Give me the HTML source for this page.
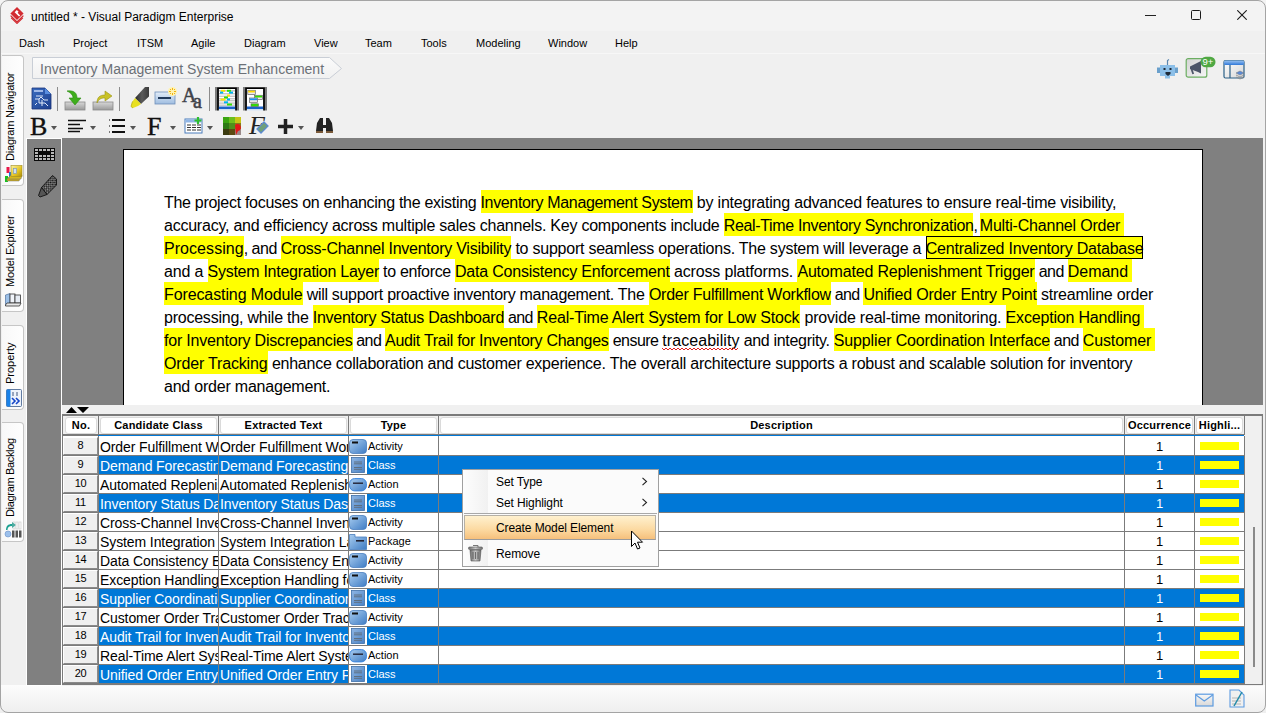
<!DOCTYPE html>
<html><head><meta charset="utf-8">
<style>
*{margin:0;padding:0;box-sizing:border-box}
html,body{width:1266px;height:713px;overflow:hidden;background:#f0f0f0;font-family:"Liberation Sans",sans-serif;color:#000;position:relative}
.a{position:absolute}
.menu{position:absolute;top:36px;font-size:11px;white-space:pre;line-height:14px}
.tab{position:absolute;left:2px;width:22px;background:linear-gradient(90deg,#f8f8f8,#fefefe);border:1px solid #c6c6c6;border-left:none;border-radius:0 4px 4px 0}
.vt{position:absolute;font-size:11px;white-space:pre;transform-origin:0 0;transform:rotate(-90deg);line-height:13px}
.sep{position:absolute;width:1px;background:#8c8c8c}
.dd{position:absolute;width:0;height:0;border-left:3px solid transparent;border-right:3px solid transparent;border-top:4px solid #555}
#frame{position:absolute;left:0;top:0;width:1266px;height:713px;border:1px solid #a4a4a4;border-radius:8px;pointer-events:none}

.hl{position:absolute;height:23px;background:#ffff00}
.tx{position:absolute;font-size:16px;line-height:23px;height:24px;white-space:pre;padding-top:1px;color:#000}
.hd{position:absolute;top:417px;height:17px;background:#fff;border:1px solid #dadada;border-radius:3px;font-size:11px;font-weight:bold;letter-spacing:0.2px;text-align:center;line-height:15px;white-space:pre;overflow:hidden}
.nb{position:absolute;left:63px;width:35px;height:18px;background:#efefef;border-top:1px solid #fff;border-left:1px solid #fff;border-right:1px solid #8a8a8a;border-bottom:1px solid #8a8a8a;font-size:11px;text-align:center;line-height:15px;letter-spacing:-0.3px}
.cl{position:absolute;height:18px;font-size:14px;letter-spacing:-0.1px;padding-top:1px;line-height:18px;white-space:pre;overflow:hidden;color:#000}
.ty{position:absolute;left:368px;width:70px;height:18px;font-size:11px;line-height:18px;white-space:pre;overflow:hidden}
.oc{position:absolute;left:1125px;width:69px;height:19px;padding-top:1px;font-size:13px;line-height:18px;text-align:center}
.mi{position:absolute;left:496px;font-size:12px;letter-spacing:-0.1px;line-height:15px;white-space:pre;color:#000}
</style></head><body>
<!-- title bar -->
<div class="a" style="left:0;top:0;width:1266px;height:31px;background:#f3f3f3"></div>
<svg class="a" style="left:10px;top:6px" width="15" height="18" viewBox="0 0 15 18">
  <path d="M7 1 L13.6 7.5 L7 14 L0.4 7.5Z" fill="#d22b31"/>
  <path d="M0.6 9.6 L7 15.9 L13.4 9.6" fill="none" stroke="#d22b31" stroke-width="1.3"/>
  <path d="M1.2 11.8 L7 17.4 L12.8 11.8" fill="none" stroke="#d22b31" stroke-width="1.2"/>
  <path d="M4.6 6.2 L6.8 4 L8.6 5.8 L7.6 6.8 L10.2 9.4 L9 10.6 Z" fill="#fff"/>
</svg>
<div class="a" style="left:31px;top:10px;font-size:12px;white-space:pre;line-height:15px">untitled * - Visual Paradigm Enterprise</div>
<!-- window controls -->
<div class="a" style="left:1145px;top:15px;width:11px;height:1px;background:#222"></div>
<div class="a" style="left:1191px;top:10px;width:10px;height:10px;border:1px solid #1a1a1a;border-radius:1.5px"></div>
<svg class="a" style="left:1237px;top:10px" width="10" height="10" viewBox="0 0 10 10"><path d="M0.3 0.3L9.7 9.7M9.7 0.3L0.3 9.7" stroke="#1a1a1a" stroke-width="1.1"/></svg>
<!-- menu -->
<div class="menu" style="left:19px">Dash</div>
<div class="menu" style="left:73px">Project</div>
<div class="menu" style="left:137px">ITSM</div>
<div class="menu" style="left:191px">Agile</div>
<div class="menu" style="left:244px">Diagram</div>
<div class="menu" style="left:314px">View</div>
<div class="menu" style="left:365px">Team</div>
<div class="menu" style="left:421px">Tools</div>
<div class="menu" style="left:476px">Modeling</div>
<div class="menu" style="left:548px">Window</div>
<div class="menu" style="left:615px">Help</div>
<div class="a" style="left:0;top:53px;width:1266px;height:1px;background:#f7f7f7"></div>


<!-- breadcrumb -->
<svg class="a" style="left:32px;top:57px" width="312" height="23" viewBox="0 0 312 23">
  <defs><linearGradient id="bcg" x1="0" y1="0" x2="0" y2="1"><stop offset="0" stop-color="#fbfbfb"/><stop offset="1" stop-color="#f1f1f1"/></linearGradient></defs>
  <path d="M0.5 0.5 H297.5 L309.5 11.5 L297.5 21.5 H0.5 Z" fill="url(#bcg)" stroke="#c9ced6"/>
</svg>
<div class="a" style="left:40px;top:61px;font-size:14px;color:#6b7077;white-space:pre;line-height:17px">Inventory Management System Enhancement</div>

<!-- toolbar row 1 -->
<svg class="a" style="left:31px;top:87px" width="21" height="23" viewBox="0 0 21 23">
  <defs><linearGradient id="g1" x1="0" y1="0" x2="1" y2="1"><stop offset="0" stop-color="#3a6cc0"/><stop offset="1" stop-color="#1e3f8e"/></linearGradient></defs>
  <path d="M1 1 H14 L20 7 V22 H1 Z" fill="url(#g1)" stroke="#1a347a" stroke-width="0.8"/>
  <path d="M14 1 V7 H20 Z" fill="#5a8ee0"/>
  <rect x="3" y="3" width="9" height="2" fill="#9fb8e8"/>
  <path d="M5 9 h7 M4 12 h4 l2 -2 l3 3 h4 M8 12 v4 h6 M6 16 l-2 2 M14 16 l3 3 M11 13 v6" stroke="#dfe8f8" stroke-width="1" fill="none"/>
</svg>
<div class="sep" style="left:57px;top:87px;height:24px"></div>
<svg class="a" style="left:64px;top:89px" width="22" height="22" viewBox="0 0 22 22">
  <defs><linearGradient id="gb" x1="0" y1="0" x2="0" y2="1"><stop offset="0" stop-color="#d8d8d8"/><stop offset="1" stop-color="#9a9a9a"/></linearGradient></defs>
  <rect x="1" y="13" width="20" height="8" fill="url(#gb)" stroke="#8a8a8a" stroke-width="0.8"/>
  <path d="M3 2 C10 1 13 4 13 9 H17 L11 16 L5 9 H9 C9 6 7 4 3 2Z" fill="#3fae1c" stroke="#2a8a10" stroke-width="0.6"/>
</svg>
<svg class="a" style="left:92px;top:89px" width="22" height="22" viewBox="0 0 22 22">
  <rect x="1" y="13" width="20" height="8" fill="url(#gb)" stroke="#8a8a8a" stroke-width="0.8"/>
  <path d="M5 14 C5 8 8 6 13 6 V2 L20 7 L13 12 V9 C9 9 7 10 5 14Z" fill="#c9c227" stroke="#9a931a" stroke-width="0.6"/>
</svg>
<div class="sep" style="left:119px;top:87px;height:24px"></div>
<svg class="a" style="left:128px;top:85px" width="22" height="24" viewBox="0 0 22 24">
  <defs><linearGradient id="hlg" x1="0" y1="0" x2="1" y2="0"><stop offset="0" stop-color="#2a2a2a"/><stop offset="0.5" stop-color="#5a5a5a"/><stop offset="1" stop-color="#3a3a3a"/></linearGradient></defs>
  <path d="M17 2 H21 V11.5 L13 19 L7 13 Z" fill="url(#hlg)"/>
  <path d="M7 13 L13 19 L10 21 L5 23 L3 21.5 L4.5 16.5 Z" fill="#e8e020"/>
  <path d="M4.5 16.5 L3 21.5 L5 23" fill="none" stroke="#b8b010" stroke-width="0.8"/>
</svg>
<svg class="a" style="left:154px;top:86px" width="24" height="20" viewBox="0 0 24 20">
  <defs><linearGradient id="gr" x1="0" y1="0" x2="0" y2="1"><stop offset="0" stop-color="#e3edf9"/><stop offset="1" stop-color="#9fbde0"/></linearGradient></defs>
  <rect x="1" y="6" width="20" height="12" fill="url(#gr)" stroke="#6f8fb9" stroke-width="0.8"/>
  <rect x="4" y="11" width="13" height="2" fill="#223b5c"/>
  <circle cx="18.5" cy="5.5" r="4.5" fill="#fff3b0"/><path d="M18.5 2v2M18.5 7v2M15 5.5h2M20 5.5h2M16 3l1 1M20 7l1 1M21 3l-1 1M17 7l-1 1" stroke="#f0a800" stroke-width="0.9"/>
</svg>
<div class="a" style="left:182px;top:85px;font-family:'Liberation Serif',serif;font-size:20px;color:#3e4148;line-height:20px;-webkit-text-stroke:0.5px #3e4148">A</div>
<div class="a" style="left:193px;top:91px;font-family:'Liberation Serif',serif;font-size:20px;color:#3e4148;line-height:20px;-webkit-text-stroke:0.5px #3e4148">a</div>
<div class="sep" style="left:209px;top:87px;height:24px"></div>
<svg class="a" style="left:215px;top:87px" width="24" height="24" viewBox="0 0 24 24">
  <rect x="0" y="0" width="2.3" height="23.5" fill="#7c7c7c"/><rect x="21.7" y="0" width="2.3" height="23.5" fill="#7c7c7c"/>
  <path d="M3 23.5 V1.2 H21 V23.5" fill="#fff" stroke="#000" stroke-width="1.8"/>
  <rect x="3.9" y="19.5" width="16.2" height="2.5" fill="#1d63c8"/><rect x="3.9" y="22" width="16.2" height="1.5" fill="#cfe0f4"/>
  <g fill="#c8c8c8"><rect x="4" y="3" width="16" height="1.6"/><rect x="4" y="6" width="16" height="1.4"/><rect x="4" y="8.6" width="16" height="1.4"/><rect x="4" y="11" width="16" height="1.4"/><rect x="4" y="13" width="16" height="1.4"/><rect x="4" y="15.4" width="16" height="1.4"/><rect x="4" y="17.5" width="16" height="1.4"/></g>
  <rect x="6" y="2.8" width="4" height="2" fill="#ffe400"/><rect x="12" y="2.8" width="4" height="2" fill="#33e000"/>
  <rect x="5" y="4.6" width="3.2" height="2" fill="#00b4f0"/><rect x="14" y="4.6" width="4" height="2" fill="#00b4f0"/>
  <rect x="12" y="7.5" width="3" height="2" fill="#ffe400"/><rect x="9" y="9.5" width="4" height="2" fill="#33e000"/>
  <rect x="5.5" y="11.5" width="5" height="2" fill="#ffe400"/><rect x="12" y="11.5" width="3" height="2" fill="#00b4f0"/>
  <rect x="9" y="14.3" width="4" height="2" fill="#00b4f0"/><rect x="12" y="16.5" width="5" height="2" fill="#33e000"/>
</svg>
<svg class="a" style="left:243px;top:87px" width="24" height="24" viewBox="0 0 24 24">
  <rect x="0" y="0" width="2.3" height="23.5" fill="#7c7c7c"/><rect x="21.7" y="0" width="2.3" height="23.5" fill="#7c7c7c"/>
  <path d="M3 23.5 V1.2 H21 V23.5" fill="#fff" stroke="#000" stroke-width="1.8"/>
  <rect x="3.9" y="19.5" width="16.2" height="2.5" fill="#1d63c8"/><rect x="3.9" y="22" width="16.2" height="1.5" fill="#cfe0f4"/>
  <rect x="4.8" y="3.3" width="7.5" height="4.3" fill="#ece8f0" stroke="#666" stroke-width="0.7"/><rect x="5.2" y="3.7" width="6.7" height="1.8" fill="#ffd800"/>
  <rect x="11.5" y="8.3" width="8" height="4.3" fill="#ece8f0" stroke="#666" stroke-width="0.7"/><rect x="11.9" y="8.7" width="7.2" height="1.8" fill="#33e000"/>
  <rect x="6.5" y="11" width="8" height="4.3" fill="#f2ece8" stroke="#666" stroke-width="0.7"/><rect x="6.9" y="11.4" width="7.2" height="1.8" fill="#1a90f0"/>
  <rect x="8" y="16.8" width="7.5" height="2.7" fill="#33e000" stroke="#666" stroke-width="0.6"/>
</svg>

<!-- toolbar row 2 -->
<div class="a" style="left:30px;top:114px;font-family:'Liberation Serif',serif;font-size:26px;line-height:26px;color:#111;-webkit-text-stroke:0.4px #111">B</div>
<div class="dd" style="left:51px;top:126px"></div>
<svg class="a" style="left:68px;top:119px" width="19" height="14" viewBox="0 0 19 14"><path d="M0 1.5h18M0 5.5h12M0 9.5h15M0 12.5h12" stroke="#111" stroke-width="1.6"/></svg>
<div class="dd" style="left:90px;top:126px"></div>
<svg class="a" style="left:108px;top:118px" width="18" height="16" viewBox="0 0 18 16"><path d="M4 2h13M4 8h13M4 14h13" stroke="#111" stroke-width="1.8"/><path d="M1 1l1 1-1 1M1 7l1 1-1 1M1 13l1 1-1 1" stroke="#444" stroke-width="0.7" fill="none"/></svg>
<div class="dd" style="left:130px;top:126px"></div>
<div class="a" style="left:147px;top:114px;font-family:'Liberation Serif',serif;font-size:26px;line-height:26px;color:#111;-webkit-text-stroke:0.4px #111">F</div>
<div class="dd" style="left:170px;top:126px"></div>
<svg class="a" style="left:184px;top:117px" width="20" height="18" viewBox="0 0 20 18">
  <rect x="1" y="2" width="17" height="14" fill="#fff" stroke="#4a7cbc"/>
  <rect x="1.5" y="2.5" width="16" height="3" fill="#8fb5e6"/>
  <path d="M3 8h4M8 8h4M13 8h4M3 10.5h4M8 10.5h4M13 10.5h4M3 13h4M8 13h4M13 13h4" stroke="#333" stroke-width="1.2"/>
  <path d="M14 0v7M10.5 3.5h7" stroke="#2fbf2f" stroke-width="2.2"/>
</svg>
<div class="dd" style="left:207px;top:126px"></div>
<svg class="a" style="left:223px;top:117px" width="19" height="18" viewBox="0 0 19 18">
  <rect x="0" y="0" width="6" height="6" fill="#3aa512"/><rect x="6" y="0" width="6" height="6" fill="#6cbf1c"/><rect x="12" y="0" width="6" height="6" fill="#c6c416"/>
  <rect x="0" y="6" width="6" height="6" fill="#2c7a14"/><rect x="6" y="6" width="6" height="6" fill="#4f8f1c"/><rect x="12" y="6" width="6" height="6" fill="#8a7a1a"/>
  <rect x="0" y="12" width="6" height="6" fill="#3b3b10"/><rect x="6" y="12" width="6" height="6" fill="#5a4a12"/><rect x="12" y="12" width="6" height="6" fill="#9a8a8a"/>
  <path d="M12 8 a3.5 3.5 0 1 1 3 6 L13 18 Z" fill="#e01818"/>
</svg>
<div class="a" style="left:249px;top:113px;font-family:'Liberation Serif',serif;font-style:italic;font-size:26px;line-height:26px;color:#222">F</div>
<svg class="a" style="left:256px;top:121px" width="13" height="13" viewBox="0 0 13 13"><path d="M8 1 L12 5 L5 12 L1 8Z" fill="#6f9f78" stroke="#5c8ad0" stroke-width="1.3"/></svg>
<svg class="a" style="left:277px;top:118px" width="17" height="17" viewBox="0 0 17 17"><path d="M8.5 1v15M1 8.5h15" stroke="#222" stroke-width="3.5"/></svg>
<div class="dd" style="left:298px;top:126px"></div>
<svg class="a" style="left:315px;top:117px" width="19" height="17" viewBox="0 0 19 17">
  <path d="M2 6 L5 1 H8 V8 H11 V1 H14 L17 6 L18 14 H11 V11 H8 V14 H1 Z" fill="#222"/>
  <rect x="1" y="14" width="7" height="2" fill="#7a5a3a"/><rect x="11" y="14" width="7" height="2" fill="#7a5a3a"/>
</svg>

<!-- right toolbar icons -->
<svg class="a" style="left:1156px;top:58px" width="24" height="22" viewBox="0 0 24 22">
  <rect x="4" y="7" width="15" height="11" fill="#8cbfe8"/>
  <rect x="1" y="9.5" width="3" height="5.5" fill="#6aa0cc"/><rect x="19" y="9.5" width="3" height="5.5" fill="#6aa0cc"/>
  <path d="M11.5 7 V2.5 L13 1.5" stroke="#5a86b0" stroke-width="1.2" fill="none"/>
  <rect x="7.5" y="10" width="2" height="2" fill="#1e2a38"/><rect x="13.5" y="10" width="2" height="2" fill="#1e2a38"/>
  <path d="M9.5 14 h5 v2 l-2.5 2 l-2.5 -2z" fill="#1e2a38"/>
  <rect x="9" y="18" width="5" height="2.5" fill="#8cbfe8"/>
</svg>
<svg class="a" style="left:1185px;top:56px" width="32" height="24" viewBox="0 0 32 24">
  <defs><linearGradient id="mgg" x1="0" y1="0" x2="1" y2="1"><stop offset="0" stop-color="#d4d4d4"/><stop offset="1" stop-color="#f6f6f6"/></linearGradient></defs>
  <rect x="1.2" y="2.6" width="20.6" height="18.6" rx="2" fill="url(#mgg)" stroke="#6cae62" stroke-width="1.2"/>
  <path d="M5 10.5 L13 6.5 V16 L5 13 Z" fill="#4c5568"/>
  <path d="M13 6.5 L16 5 V17.5 L13 16Z" fill="#4c5568"/>
  <path d="M6.5 13 L8.2 18" stroke="#4c5568" stroke-width="1.8"/>
  <rect x="15.5" y="0.8" width="15" height="10.5" rx="5.2" fill="#4fa843"/>
  <text x="23" y="9.3" font-family="Liberation Sans" font-size="9.5" fill="#fff" text-anchor="middle">9+</text>
</svg>
<svg class="a" style="left:1223px;top:59px" width="23" height="22" viewBox="0 0 23 22">
  <defs><linearGradient id="lyg" x1="0" y1="0" x2="0" y2="1"><stop offset="0" stop-color="#9cc4f2"/><stop offset="1" stop-color="#2f78d8"/></linearGradient>
  <linearGradient id="lyp" x1="0" y1="0" x2="1" y2="1"><stop offset="0" stop-color="#ffffff"/><stop offset="1" stop-color="#d6d6d6"/></linearGradient></defs>
  <rect x="1" y="1.5" width="20" height="17.5" rx="1.5" fill="url(#lyp)" stroke="#2a5f86" stroke-width="1.2"/>
  <rect x="1" y="1.5" width="20" height="4.5" rx="1.5" fill="url(#lyg)"/>
  <path d="M7 6 V19" stroke="#2a5f86" stroke-width="1.2"/>
  <path d="M13 14 l4 -2 l4 2 l-4 2z" fill="#5a8ad8" stroke="#777" stroke-width="0.5"/>
  <path d="M13 16 l4 2 l4 -2 M13 18 l4 2 l4 -2" fill="none" stroke="#888" stroke-width="0.8"/>
</svg>

<!-- left tabs -->
<div class="tab" style="top:55px;height:131px"></div>
<div class="tab" style="top:199px;height:113px"></div>
<div class="tab" style="top:325px;height:85px"></div>
<div class="tab" style="top:422px;height:120px"></div>
<div class="vt" style="left:4px;top:160.5px;letter-spacing:-0.2px">Diagram Navigator</div>
<div class="vt" style="left:4px;top:287px;letter-spacing:-0.18px">Model Explorer</div>
<div class="vt" style="left:4px;top:383.5px">Property</div>
<div class="vt" style="left:4px;top:517px;letter-spacing:-0.33px">Diagram Backlog</div>

<!-- status bar -->
<div class="a" style="left:0;top:685px;width:1266px;height:28px;background:linear-gradient(#fcfcfc,#eeeeee)"></div>
<!-- canvas areas -->
<div class="a" style="left:26px;top:138px;width:1237px;height:548px;background:#fff"></div>
<div class="a" style="left:27px;top:139px;width:34px;height:546px;background:#808080"></div>
<div class="a" style="left:62px;top:138px;width:1201px;height:267px;background:#808080"></div>
<div class="a" style="left:123px;top:149px;width:1080px;height:256px;background:#fff;border:1px solid #000;border-bottom:none"></div>


<!-- table -->
<svg width="0" height="0" style="position:absolute"><defs>
<linearGradient id="actg" x1="0" y1="0" x2="1" y2="1"><stop offset="0" stop-color="#a9cdf0"/><stop offset="1" stop-color="#3f7cc4"/></linearGradient>
<linearGradient id="clsg" x1="0" y1="0" x2="1" y2="1"><stop offset="0" stop-color="#8fb6e4"/><stop offset="1" stop-color="#4a82c4"/></linearGradient>
</defs></svg>
<div class="a" style="left:62px;top:405px;width:1201px;height:281px;background:#f0f0f0"></div>
<svg class="a" style="left:65px;top:406px" width="25" height="8" viewBox="0 0 25 8"><path d="M1 7 L6.5 1 L12 7Z M12 1 H24 L18 7Z" fill="#000"/></svg>
<div class="a" style="left:62px;top:414px;width:1201px;height:271px;border:1px solid #7b7b7b;border-top-width:2px;background:#fff"></div>
<div class="a" style="left:63px;top:416px;width:1181px;height:19px;background:#f0f0f0"></div>
<div class="a" style="left:1244px;top:416px;width:18px;height:268px;background:#f0f0f0;border-right:1px solid #dcdcdc"></div>
<div class="a" style="left:1253px;top:527px;width:2px;height:140px;background:#8a8a8a"></div>

<div class="hd" style="left:65px;width:32px">No.</div>
<div class="a" style="left:98px;top:416px;width:1px;height:19px;background:#7b7b7b"></div>
<div class="hd" style="left:100px;width:117px">Candidate Class</div>
<div class="a" style="left:218px;top:416px;width:1px;height:19px;background:#7b7b7b"></div>
<div class="hd" style="left:220px;width:127px">Extracted Text</div>
<div class="a" style="left:348px;top:416px;width:1px;height:19px;background:#7b7b7b"></div>
<div class="hd" style="left:350px;width:87px">Type</div>
<div class="a" style="left:438px;top:416px;width:1px;height:19px;background:#7b7b7b"></div>
<div class="hd" style="left:440px;width:683px">Description</div>
<div class="a" style="left:1124px;top:416px;width:1px;height:19px;background:#7b7b7b"></div>
<div class="hd" style="left:1126px;width:67px">Occurrence</div>
<div class="a" style="left:1194px;top:416px;width:1px;height:19px;background:#7b7b7b"></div>
<div class="hd" style="left:1196px;width:47px">Highli...</div>
<div class="a" style="left:1244px;top:416px;width:1px;height:19px;background:#7b7b7b"></div>
<div class="a" style="left:63px;top:434px;width:1181px;height:1px;background:#7b7b7b"></div>
<div class="a" style="left:98px;top:435px;width:1146px;height:1px;background:#0078d7"></div>
<div class="a" style="left:63px;top:435px;width:35px;height:1px;background:#7b7b7b"></div>
<div class="a" style="left:63px;top:455px;width:1181px;height:1px;background:#7b7b7b"></div>
<div class="nb" style="top:437px">8</div>
<div class="cl" style="left:100px;top:437px;width:118px;">Order Fulfillment Workflow</div>
<div class="cl" style="left:220px;top:437px;width:128px;">Order Fulfillment Workflow</div>
<svg class="a" style="left:349px;top:439px" width="18" height="15" viewBox="0 0 18 15"><defs></defs><rect x="0.5" y="0.5" width="17" height="14" rx="3.5" fill="url(#actg)" stroke="#4a7fbf" stroke-width="0.8"/><rect x="3" y="2.5" width="6" height="2" fill="#111"/></svg>
<div class="ty" style="top:437px;">Activity</div>
<div class="oc" style="top:437px;">1</div>
<div class="a" style="left:1200px;top:442px;width:39px;height:8px;background:#ffff00"></div>
<div class="a" style="left:98px;top:456px;width:1146px;height:18px;background:#0078d7"></div>
<div class="a" style="left:63px;top:474px;width:1181px;height:1px;background:#7b7b7b"></div>
<div class="nb" style="top:456px">9</div>
<div class="cl" style="left:100px;top:456px;width:118px;color:#fff;">Demand Forecasting Module</div>
<div class="cl" style="left:220px;top:456px;width:128px;color:#fff;">Demand Forecasting Module</div>
<div class="a" style="left:349px;top:456px;width:18px;height:18px;background:#fff"></div><svg class="a" style="left:351px;top:457px" width="14" height="16" viewBox="0 0 14 16"><rect x="0.5" y="0.5" width="13" height="15" fill="url(#clsg)" stroke="#3e6fa8" stroke-width="0.8"/><path d="M3 5h8M3 6.8h8M3 10.5h8M3 12.3h8" stroke="#5f6f80" stroke-width="1"/></svg>
<div class="ty" style="top:456px;color:#fff;">Class</div>
<div class="oc" style="top:456px;color:#fff;">1</div>
<div class="a" style="left:1200px;top:461px;width:39px;height:8px;background:#ffff00"></div>
<div class="a" style="left:63px;top:493px;width:1181px;height:1px;background:#7b7b7b"></div>
<div class="nb" style="top:475px">10</div>
<div class="cl" style="left:100px;top:475px;width:118px;">Automated Replenishment Trigger</div>
<div class="cl" style="left:220px;top:475px;width:128px;">Automated Replenishment Trigger</div>
<svg class="a" style="left:349px;top:478px" width="18" height="14" viewBox="0 0 18 14"><rect x="0.6" y="0.6" width="16.8" height="12.3" rx="5" fill="url(#actg)" stroke="#3a86e0" stroke-width="1"/><rect x="4" y="4.5" width="10" height="1.4" fill="#223"/></svg>
<div class="ty" style="top:475px;">Action</div>
<div class="oc" style="top:475px;">1</div>
<div class="a" style="left:1200px;top:480px;width:39px;height:8px;background:#ffff00"></div>
<div class="a" style="left:98px;top:494px;width:1146px;height:18px;background:#0078d7"></div>
<div class="a" style="left:63px;top:512px;width:1181px;height:1px;background:#7b7b7b"></div>
<div class="nb" style="top:494px">11</div>
<div class="cl" style="left:100px;top:494px;width:118px;color:#fff;">Inventory Status Dashboard</div>
<div class="cl" style="left:220px;top:494px;width:128px;color:#fff;">Inventory Status Dashboard</div>
<div class="a" style="left:349px;top:494px;width:18px;height:18px;background:#fff"></div><svg class="a" style="left:351px;top:495px" width="14" height="16" viewBox="0 0 14 16"><rect x="0.5" y="0.5" width="13" height="15" fill="url(#clsg)" stroke="#3e6fa8" stroke-width="0.8"/><path d="M3 5h8M3 6.8h8M3 10.5h8M3 12.3h8" stroke="#5f6f80" stroke-width="1"/></svg>
<div class="ty" style="top:494px;color:#fff;">Class</div>
<div class="oc" style="top:494px;color:#fff;">1</div>
<div class="a" style="left:1200px;top:499px;width:39px;height:8px;background:#ffff00"></div>
<div class="a" style="left:63px;top:531px;width:1181px;height:1px;background:#7b7b7b"></div>
<div class="nb" style="top:513px">12</div>
<div class="cl" style="left:100px;top:513px;width:118px;">Cross-Channel Inventory Visibility</div>
<div class="cl" style="left:220px;top:513px;width:128px;">Cross-Channel Inventory Visibility</div>
<svg class="a" style="left:349px;top:515px" width="18" height="15" viewBox="0 0 18 15"><defs></defs><rect x="0.5" y="0.5" width="17" height="14" rx="3.5" fill="url(#actg)" stroke="#4a7fbf" stroke-width="0.8"/><rect x="3" y="2.5" width="6" height="2" fill="#111"/></svg>
<div class="ty" style="top:513px;">Activity</div>
<div class="oc" style="top:513px;">1</div>
<div class="a" style="left:1200px;top:518px;width:39px;height:8px;background:#ffff00"></div>
<div class="a" style="left:63px;top:550px;width:1181px;height:1px;background:#7b7b7b"></div>
<div class="nb" style="top:532px">13</div>
<div class="cl" style="left:100px;top:532px;width:118px;">System Integration Layer</div>
<div class="cl" style="left:220px;top:532px;width:128px;">System Integration Layer</div>
<svg class="a" style="left:349px;top:534px" width="18" height="16" viewBox="0 0 18 16"><path d="M0.5 0.5 H6 V3 H17.5 V15.5 H0.5Z" fill="url(#actg)" stroke="#4a7fbf" stroke-width="0.8"/><rect x="7" y="6" width="8" height="1.6" fill="#223"/></svg>
<div class="ty" style="top:532px;">Package</div>
<div class="oc" style="top:532px;">1</div>
<div class="a" style="left:1200px;top:537px;width:39px;height:8px;background:#ffff00"></div>
<div class="a" style="left:63px;top:569px;width:1181px;height:1px;background:#7b7b7b"></div>
<div class="nb" style="top:551px">14</div>
<div class="cl" style="left:100px;top:551px;width:118px;">Data Consistency Enforcement</div>
<div class="cl" style="left:220px;top:551px;width:128px;">Data Consistency Enforcement</div>
<svg class="a" style="left:349px;top:553px" width="18" height="15" viewBox="0 0 18 15"><defs></defs><rect x="0.5" y="0.5" width="17" height="14" rx="3.5" fill="url(#actg)" stroke="#4a7fbf" stroke-width="0.8"/><rect x="3" y="2.5" width="6" height="2" fill="#111"/></svg>
<div class="ty" style="top:551px;">Activity</div>
<div class="oc" style="top:551px;">1</div>
<div class="a" style="left:1200px;top:556px;width:39px;height:8px;background:#ffff00"></div>
<div class="a" style="left:63px;top:588px;width:1181px;height:1px;background:#7b7b7b"></div>
<div class="nb" style="top:570px">15</div>
<div class="cl" style="left:100px;top:570px;width:118px;">Exception Handling for Inventory Discrepancies</div>
<div class="cl" style="left:220px;top:570px;width:128px;">Exception Handling for Inventory Discrepancies</div>
<svg class="a" style="left:349px;top:572px" width="18" height="15" viewBox="0 0 18 15"><defs></defs><rect x="0.5" y="0.5" width="17" height="14" rx="3.5" fill="url(#actg)" stroke="#4a7fbf" stroke-width="0.8"/><rect x="3" y="2.5" width="6" height="2" fill="#111"/></svg>
<div class="ty" style="top:570px;">Activity</div>
<div class="oc" style="top:570px;">1</div>
<div class="a" style="left:1200px;top:575px;width:39px;height:8px;background:#ffff00"></div>
<div class="a" style="left:98px;top:589px;width:1146px;height:18px;background:#0078d7"></div>
<div class="a" style="left:63px;top:607px;width:1181px;height:1px;background:#7b7b7b"></div>
<div class="nb" style="top:589px">16</div>
<div class="cl" style="left:100px;top:589px;width:118px;color:#fff;">Supplier Coordination Interface</div>
<div class="cl" style="left:220px;top:589px;width:128px;color:#fff;">Supplier Coordination Interface</div>
<div class="a" style="left:349px;top:589px;width:18px;height:18px;background:#fff"></div><svg class="a" style="left:351px;top:590px" width="14" height="16" viewBox="0 0 14 16"><rect x="0.5" y="0.5" width="13" height="15" fill="url(#clsg)" stroke="#3e6fa8" stroke-width="0.8"/><path d="M3 5h8M3 6.8h8M3 10.5h8M3 12.3h8" stroke="#5f6f80" stroke-width="1"/></svg>
<div class="ty" style="top:589px;color:#fff;">Class</div>
<div class="oc" style="top:589px;color:#fff;">1</div>
<div class="a" style="left:1200px;top:594px;width:39px;height:8px;background:#ffff00"></div>
<div class="a" style="left:63px;top:626px;width:1181px;height:1px;background:#7b7b7b"></div>
<div class="nb" style="top:608px">17</div>
<div class="cl" style="left:100px;top:608px;width:118px;">Customer Order Tracking</div>
<div class="cl" style="left:220px;top:608px;width:128px;">Customer Order Tracking</div>
<svg class="a" style="left:349px;top:610px" width="18" height="15" viewBox="0 0 18 15"><defs></defs><rect x="0.5" y="0.5" width="17" height="14" rx="3.5" fill="url(#actg)" stroke="#4a7fbf" stroke-width="0.8"/><rect x="3" y="2.5" width="6" height="2" fill="#111"/></svg>
<div class="ty" style="top:608px;">Activity</div>
<div class="oc" style="top:608px;">1</div>
<div class="a" style="left:1200px;top:613px;width:39px;height:8px;background:#ffff00"></div>
<div class="a" style="left:98px;top:627px;width:1146px;height:18px;background:#0078d7"></div>
<div class="a" style="left:63px;top:645px;width:1181px;height:1px;background:#7b7b7b"></div>
<div class="nb" style="top:627px">18</div>
<div class="cl" style="left:100px;top:627px;width:118px;color:#fff;">Audit Trail for Inventory Changes</div>
<div class="cl" style="left:220px;top:627px;width:128px;color:#fff;">Audit Trail for Inventory Changes</div>
<div class="a" style="left:349px;top:627px;width:18px;height:18px;background:#fff"></div><svg class="a" style="left:351px;top:628px" width="14" height="16" viewBox="0 0 14 16"><rect x="0.5" y="0.5" width="13" height="15" fill="url(#clsg)" stroke="#3e6fa8" stroke-width="0.8"/><path d="M3 5h8M3 6.8h8M3 10.5h8M3 12.3h8" stroke="#5f6f80" stroke-width="1"/></svg>
<div class="ty" style="top:627px;color:#fff;">Class</div>
<div class="oc" style="top:627px;color:#fff;">1</div>
<div class="a" style="left:1200px;top:632px;width:39px;height:8px;background:#ffff00"></div>
<div class="a" style="left:63px;top:664px;width:1181px;height:1px;background:#7b7b7b"></div>
<div class="nb" style="top:646px">19</div>
<div class="cl" style="left:100px;top:646px;width:118px;">Real-Time Alert System for Low Stock</div>
<div class="cl" style="left:220px;top:646px;width:128px;">Real-Time Alert System for Low Stock</div>
<svg class="a" style="left:349px;top:649px" width="18" height="14" viewBox="0 0 18 14"><rect x="0.6" y="0.6" width="16.8" height="12.3" rx="5" fill="url(#actg)" stroke="#3a86e0" stroke-width="1"/><rect x="4" y="4.5" width="10" height="1.4" fill="#223"/></svg>
<div class="ty" style="top:646px;">Action</div>
<div class="oc" style="top:646px;">1</div>
<div class="a" style="left:1200px;top:651px;width:39px;height:8px;background:#ffff00"></div>
<div class="a" style="left:98px;top:665px;width:1146px;height:18px;background:#0078d7"></div>
<div class="a" style="left:63px;top:683px;width:1181px;height:1px;background:#7b7b7b"></div>
<div class="nb" style="top:665px">20</div>
<div class="cl" style="left:100px;top:665px;width:118px;color:#fff;">Unified Order Entry Point</div>
<div class="cl" style="left:220px;top:665px;width:128px;color:#fff;">Unified Order Entry Point</div>
<div class="a" style="left:349px;top:665px;width:18px;height:18px;background:#fff"></div><svg class="a" style="left:351px;top:666px" width="14" height="16" viewBox="0 0 14 16"><rect x="0.5" y="0.5" width="13" height="15" fill="url(#clsg)" stroke="#3e6fa8" stroke-width="0.8"/><path d="M3 5h8M3 6.8h8M3 10.5h8M3 12.3h8" stroke="#5f6f80" stroke-width="1"/></svg>
<div class="ty" style="top:665px;color:#fff;">Class</div>
<div class="oc" style="top:665px;color:#fff;">1</div>
<div class="a" style="left:1200px;top:670px;width:39px;height:8px;background:#ffff00"></div>
<div class="a" style="left:98px;top:436px;width:1px;height:248px;background:#7b7b7b"></div>
<div class="a" style="left:218px;top:436px;width:1px;height:248px;background:#7b7b7b"></div>
<div class="a" style="left:348px;top:436px;width:1px;height:248px;background:#7b7b7b"></div>
<div class="a" style="left:438px;top:436px;width:1px;height:248px;background:#7b7b7b"></div>
<div class="a" style="left:1124px;top:436px;width:1px;height:248px;background:#7b7b7b"></div>
<div class="a" style="left:1194px;top:436px;width:1px;height:248px;background:#7b7b7b"></div>
<div class="a" style="left:1244px;top:436px;width:1px;height:248px;background:#7b7b7b"></div>
<!-- end table -->

<!-- document text -->
<div id="doc">
<div class="tx" style="left:164.0px;top:190px;letter-spacing:-0.293px">The project focuses on enhancing the existing </div>
<div class="hl" style="left:480.5px;top:190px;width:212.1px;"></div>
<div class="tx" style="left:480.5px;top:190px;letter-spacing:-0.346px">Inventory Management System</div>
<div class="tx" style="left:692.6px;top:190px;letter-spacing:-0.209px"> by integrating advanced features to ensure real-time visibility,</div>
<div class="tx" style="left:164.0px;top:213px;letter-spacing:-0.233px">accuracy, and efficiency across multiple sales channels. Key components include </div>
<div class="hl" style="left:723.7px;top:213px;width:249.8px;"></div>
<div class="tx" style="left:723.7px;top:213px;letter-spacing:-0.341px">Real-Time Inventory Synchronization</div>
<div class="tx" style="left:973.5px;top:213px;letter-spacing:-1.295px">, </div>
<div class="hl" style="left:979.8px;top:213px;width:144.5px;"></div>
<div class="tx" style="left:979.8px;top:213px;letter-spacing:-0.200px">Multi-Channel Order </div>
<div class="hl" style="left:164.0px;top:236px;width:79.7px;"></div>
<div class="tx" style="left:164.0px;top:236px;letter-spacing:0.055px">Processing</div>
<div class="tx" style="left:243.7px;top:236px;letter-spacing:-0.489px">, and </div>
<div class="hl" style="left:280.8px;top:236px;width:230.4px;"></div>
<div class="tx" style="left:280.8px;top:236px;letter-spacing:-0.250px">Cross-Channel Inventory Visibility</div>
<div class="tx" style="left:511.2px;top:236px;letter-spacing:-0.236px"> to support seamless operations. The system will leverage a </div>
<div class="hl" style="left:925.7px;top:236px;width:217.8px;border:1px solid #000;"></div>
<div class="tx" style="left:925.7px;top:236px;letter-spacing:-0.211px">Centralized Inventory Database</div>
<div class="tx" style="left:164.0px;top:259px;letter-spacing:-0.164px">and a </div>
<div class="hl" style="left:207.5px;top:259px;width:171.5px;"></div>
<div class="tx" style="left:207.5px;top:259px;letter-spacing:-0.265px">System Integration Layer</div>
<div class="tx" style="left:379.0px;top:259px;letter-spacing:-0.337px"> to enforce </div>
<div class="hl" style="left:455.0px;top:259px;width:214.6px;"></div>
<div class="tx" style="left:455.0px;top:259px;letter-spacing:-0.212px">Data Consistency Enforcement</div>
<div class="tx" style="left:669.6px;top:259px;letter-spacing:-0.153px"> across platforms. </div>
<div class="hl" style="left:797.4px;top:259px;width:237.4px;"></div>
<div class="tx" style="left:797.4px;top:259px;letter-spacing:-0.183px">Automated Replenishment Trigger</div>
<div class="tx" style="left:1034.8px;top:259px;letter-spacing:-0.517px"> and </div>
<div class="hl" style="left:1067.8px;top:259px;width:64.7px;"></div>
<div class="tx" style="left:1067.8px;top:259px;letter-spacing:-0.032px">Demand </div>
<div class="hl" style="left:164.0px;top:282px;width:138.6px;"></div>
<div class="tx" style="left:164.0px;top:282px;letter-spacing:-0.106px">Forecasting Module</div>
<div class="tx" style="left:302.6px;top:282px;letter-spacing:-0.313px"> will support proactive inventory management. The </div>
<div class="hl" style="left:648.9px;top:282px;width:182.0px;"></div>
<div class="tx" style="left:648.9px;top:282px;letter-spacing:-0.238px">Order Fulfillment Workflow</div>
<div class="tx" style="left:830.9px;top:282px;letter-spacing:-0.617px"> and </div>
<div class="hl" style="left:863.4px;top:282px;width:173.3px;"></div>
<div class="tx" style="left:863.4px;top:282px;letter-spacing:-0.182px">Unified Order Entry Point</div>
<div class="tx" style="left:1036.7px;top:282px;letter-spacing:-0.220px"> streamline order</div>
<div class="tx" style="left:164.0px;top:305px;letter-spacing:-0.230px">processing, while the </div>
<div class="hl" style="left:312.8px;top:305px;width:191.2px;"></div>
<div class="tx" style="left:312.8px;top:305px;letter-spacing:-0.274px">Inventory Status Dashboard</div>
<div class="tx" style="left:504.0px;top:305px;letter-spacing:-0.557px"> and </div>
<div class="hl" style="left:536.8px;top:305px;width:263.5px;"></div>
<div class="tx" style="left:536.8px;top:305px;letter-spacing:-0.172px">Real-Time Alert System for Low Stock</div>
<div class="tx" style="left:800.3px;top:305px;letter-spacing:-0.205px"> provide real-time monitoring. </div>
<div class="hl" style="left:1005.6px;top:305px;width:138.8px;"></div>
<div class="tx" style="left:1005.6px;top:305px;letter-spacing:-0.185px">Exception Handling </div>
<div class="hl" style="left:164.0px;top:328px;width:188.5px;"></div>
<div class="tx" style="left:164.0px;top:328px;letter-spacing:-0.198px">for Inventory Discrepancies</div>
<div class="tx" style="left:352.5px;top:328px;letter-spacing:-0.617px"> and </div>
<div class="hl" style="left:385.0px;top:328px;width:223.8px;"></div>
<div class="tx" style="left:385.0px;top:328px;letter-spacing:-0.288px">Audit Trail for Inventory Changes</div>
<div class="tx" style="left:608.8px;top:328px;letter-spacing:-0.539px"> ensure </div>
<div class="tx" style="left:662.3px;top:328px;letter-spacing:0.060px">traceability</div>
<div class="tx" style="left:739.5px;top:328px;letter-spacing:-0.313px"> and integrity. </div>
<div class="hl" style="left:833.8px;top:328px;width:216.2px;"></div>
<div class="tx" style="left:833.8px;top:328px;letter-spacing:-0.141px">Supplier Coordination Interface</div>
<div class="tx" style="left:1050.0px;top:328px;letter-spacing:-0.577px"> and </div>
<div class="hl" style="left:1082.7px;top:328px;width:72.8px;"></div>
<div class="tx" style="left:1082.7px;top:328px;letter-spacing:-0.111px">Customer </div>
<div class="hl" style="left:164.0px;top:351px;width:103.7px;"></div>
<div class="tx" style="left:164.0px;top:351px;letter-spacing:-0.172px">Order Tracking</div>
<div class="tx" style="left:267.7px;top:351px;letter-spacing:-0.245px"> enhance collaboration and customer experience. The overall architecture supports a robust and scalable solution for inventory</div>
<div class="tx" style="left:164.0px;top:374px;letter-spacing:-0.213px">and order management.</div>
<svg class="a" style="left:662px;top:347px" width="78" height="4" viewBox="0 0 78 4"><polyline fill="none" stroke="#e02020" stroke-width="1" points="0,1 2,3 4,1 6,3 8,1 10,3 12,1 14,3 16,1 18,3 20,1 22,3 24,1 26,3 28,1 30,3 32,1 34,3 36,1 38,3 40,1 42,3 44,1 46,3 48,1 50,3 52,1 54,3 56,1 58,3 60,1 62,3 64,1 66,3 68,1 70,3 72,1 74,3 76,1"/></svg>
</div>



<!-- tab icons -->
<svg class="a" style="left:4px;top:164px" width="19" height="19" viewBox="0 0 19 19">
  <defs><linearGradient id="yb" x1="0" y1="0" x2="1" y2="1"><stop offset="0" stop-color="#fff6a0"/><stop offset="0.6" stop-color="#e2c21e"/><stop offset="1" stop-color="#a88a10"/></linearGradient></defs>
  <rect x="2.5" y="3" width="3" height="6" fill="#e8184a"/>
  <rect x="5" y="8" width="3" height="6" fill="#1a78e0"/>
  <rect x="1" y="12" width="3" height="6" fill="#18c020"/>
  <path d="M3 15 L5 13 H17 L15 17 H3Z" fill="#c8a81a" stroke="#777" stroke-width="0.5"/>
  <path d="M5 13 L7 11 H18 L17 15 H5Z" fill="#d6b81c" stroke="#777" stroke-width="0.5"/>
  <rect x="7" y="1.5" width="11" height="11" fill="url(#yb)" stroke="#a08a20" stroke-width="0.6"/>
  <rect x="9.5" y="4.5" width="3" height="5" fill="#cfe0f0" stroke="#7090c0" stroke-width="0.6"/>
</svg>
<svg class="a" style="left:4px;top:292px" width="18" height="16" viewBox="0 0 18 16">
  <path d="M1.5 3 L6 1.5 V11 L1.5 13Z" fill="#9cc0e8" stroke="#3a5f90" stroke-width="0.6"/>
  <rect x="6" y="2" width="5" height="9" fill="#f0f4fa" stroke="#333" stroke-width="0.8"/>
  <rect x="11" y="3" width="5.5" height="8" fill="#e6ecf4" stroke="#333" stroke-width="0.8"/>
  <path d="M1.5 13 L3 11 H17 L15.5 14 H1.5Z" fill="#e8e8e8" stroke="#333" stroke-width="0.8"/>
</svg>
<svg class="a" style="left:6px;top:389px" width="16" height="18" viewBox="0 0 16 18">
  <rect x="0.5" y="0.5" width="15" height="17" rx="1" fill="#eef3fa" stroke="#3b5a8a" stroke-width="0.8"/>
  <rect x="0.5" y="0.5" width="4" height="17" rx="1" fill="#1a82e8"/>
  <path d="M7 3 V7 M11 3 V7" stroke="#7a8aa8" stroke-width="1.5"/>
  <path d="M6 9 L9 12 L6 15 M10 9 L13 12 L10 15" fill="none" stroke="#1546c8" stroke-width="1.6"/>
</svg>
<svg class="a" style="left:4px;top:521px" width="18" height="17" viewBox="0 0 18 17">
  <path d="M2 9 C2 5 4 3 8 3 V1 L12 4 L8 7 V5 C5 5 3.5 6.5 3.5 9Z" fill="#1aa090"/>
  <circle cx="4" cy="13" r="3" fill="#9cc0ec" stroke="#6a90c8" stroke-width="0.6"/>
  <rect x="9" y="1" width="2" height="7" fill="none" stroke="#c8c8c8" stroke-width="0.6"/><rect x="12" y="1" width="2" height="7" fill="none" stroke="#c8c8c8" stroke-width="0.6"/><rect x="15" y="1" width="2" height="7" fill="none" stroke="#c8c8c8" stroke-width="0.6"/>
  <rect x="8" y="9.5" width="2.5" height="7" fill="#555"/><rect x="11.5" y="9.5" width="2.5" height="7" fill="#555"/><rect x="15" y="9.5" width="2.5" height="7" fill="#555"/>
</svg>
<!-- vertical toolbar icons -->
<svg class="a" style="left:34px;top:148px" width="21" height="13" viewBox="0 0 21 13"><rect x="0" y="0" width="21" height="13" fill="#0a0a0a"/><g fill="#b8b8b8"><rect x="1" y="1" width="3" height="2"/><rect x="5" y="1" width="3" height="2"/><rect x="9" y="1" width="3" height="2"/><rect x="13" y="1" width="3" height="2"/><rect x="17" y="1" width="3" height="2"/><rect x="1" y="4" width="3" height="2"/><rect x="17" y="4" width="3" height="2"/><rect x="1" y="7" width="3" height="2"/><rect x="5" y="7" width="3" height="2"/><rect x="9" y="7" width="3" height="2"/><rect x="13" y="7" width="3" height="2"/><rect x="17" y="7" width="3" height="2"/><rect x="1" y="10" width="3" height="2"/><rect x="5" y="10" width="3" height="2"/><rect x="9" y="10" width="3" height="2"/><rect x="13" y="10" width="3" height="2"/><rect x="17" y="10" width="3" height="2"/></g></svg>
<svg class="a" style="left:37px;top:174px" width="21" height="24" viewBox="0 0 21 24">
  <defs><pattern id="chk" width="3" height="3" patternUnits="userSpaceOnUse" patternTransform="rotate(45)"><rect width="3" height="3" fill="#111"/><rect width="1.5" height="1.5" fill="#9a9a9a"/><rect x="1.5" y="1.5" width="1.5" height="1.5" fill="#9a9a9a"/></pattern></defs>
  <path d="M4.5 13.5 L15.5 1.5 L19.5 5 L19.5 11 L10 20.5 Z" fill="url(#chk)" stroke="#111" stroke-width="0.9"/>
  <path d="M4.5 13.5 L10 20.5 L3 23 L1.5 21.5 Z" fill="#555" stroke="#111" stroke-width="0.9"/>
</svg>
<!-- status icons -->
<svg class="a" style="left:1195px;top:693px" width="19" height="14" viewBox="0 0 19 14">
  <defs><linearGradient id="mg" x1="0" y1="0" x2="0" y2="1"><stop offset="0" stop-color="#f8f8f8"/><stop offset="1" stop-color="#d8d8d8"/></linearGradient></defs>
  <rect x="0.7" y="1.2" width="17.3" height="11.8" fill="url(#mg)" stroke="#5d9be0" stroke-width="1.2"/>
  <path d="M1 2 L9.3 8 L17.7 2" fill="none" stroke="#5d9be0" stroke-width="1.1"/>
</svg>
<svg class="a" style="left:1229px;top:689px" width="17" height="19" viewBox="0 0 17 19">
  <path d="M1 1 H10 L15 6 V18 H1Z" fill="#f0f0f0" stroke="#5d9be0" stroke-width="1.1"/>
  <path d="M3 9h9M3 12h9M3 15h9" stroke="#c8c8c8" stroke-width="1.5"/>
  <path d="M13 3 L5 17" stroke="#1f8aa8" stroke-width="1.5"/>
</svg>

<!-- context menu -->
<div class="a" style="left:462px;top:469px;width:197px;height:98px;background:#fbfbfb;border:1px solid #a0a0a0"></div>
<div class="a" style="left:463px;top:470px;width:25px;height:43px;background:linear-gradient(90deg,#fdfdfd,#f1f1f1)"></div>
<div class="a" style="left:463px;top:540px;width:25px;height:26px;background:linear-gradient(90deg,#fdfdfd,#f1f1f1)"></div>
<div class="a" style="left:464px;top:513px;width:193px;height:1px;background:#a8a8a8"></div>
<div class="mi" style="top:475px">Set Type</div>
<div class="mi" style="top:496px">Set Highlight</div>
<svg class="a" style="left:641px;top:477px" width="8" height="9" viewBox="0 0 8 9"><path d="M1.5 0.8 L5.5 4.5 L1.5 8.2" fill="none" stroke="#222" stroke-width="1.1"/></svg>
<svg class="a" style="left:641px;top:498px" width="8" height="9" viewBox="0 0 8 9"><path d="M1.5 0.8 L5.5 4.5 L1.5 8.2" fill="none" stroke="#222" stroke-width="1.1"/></svg>
<div class="a" style="left:464px;top:515px;width:192px;height:25px;background:linear-gradient(#fff1cf,#fcd9a0 60%,#f6c07c);border:1px solid #b5b0a6;border-bottom-color:#9c9c9c"></div>
<div class="mi" style="top:521px">Create Model Element</div>
<div class="mi" style="top:547px">Remove</div>
<svg class="a" style="left:467px;top:544px" width="17" height="18" viewBox="0 0 17 18">
  <defs><linearGradient id="tg" x1="0" y1="0" x2="1" y2="0"><stop offset="0" stop-color="#6a6a6a"/><stop offset="0.5" stop-color="#c8c8c8"/><stop offset="1" stop-color="#6a6a6a"/></linearGradient></defs>
  <path d="M6 1.5 h5 v1.5" fill="none" stroke="#777" stroke-width="1"/>
  <rect x="1.5" y="3" width="14" height="2.5" rx="1" fill="url(#tg)" stroke="#555" stroke-width="0.6"/>
  <path d="M3 6 H14 L13 17 H4 Z" fill="url(#tg)" stroke="#555" stroke-width="0.6"/>
  <path d="M6 8 V15 M8.5 8 V15 M11 8 V15" stroke="#555" stroke-width="0.8"/>
</svg>
<svg class="a" style="left:630px;top:530px" width="14" height="21" viewBox="0 0 14 21">
  <path d="M1.5 1 V16.5 L5 13 L7.5 19 L10 18 L7.5 12.2 H12.5 Z" fill="#fff" stroke="#000" stroke-width="1" stroke-linejoin="round"/>
</svg>


<div id="frame"></div>
</body></html>
